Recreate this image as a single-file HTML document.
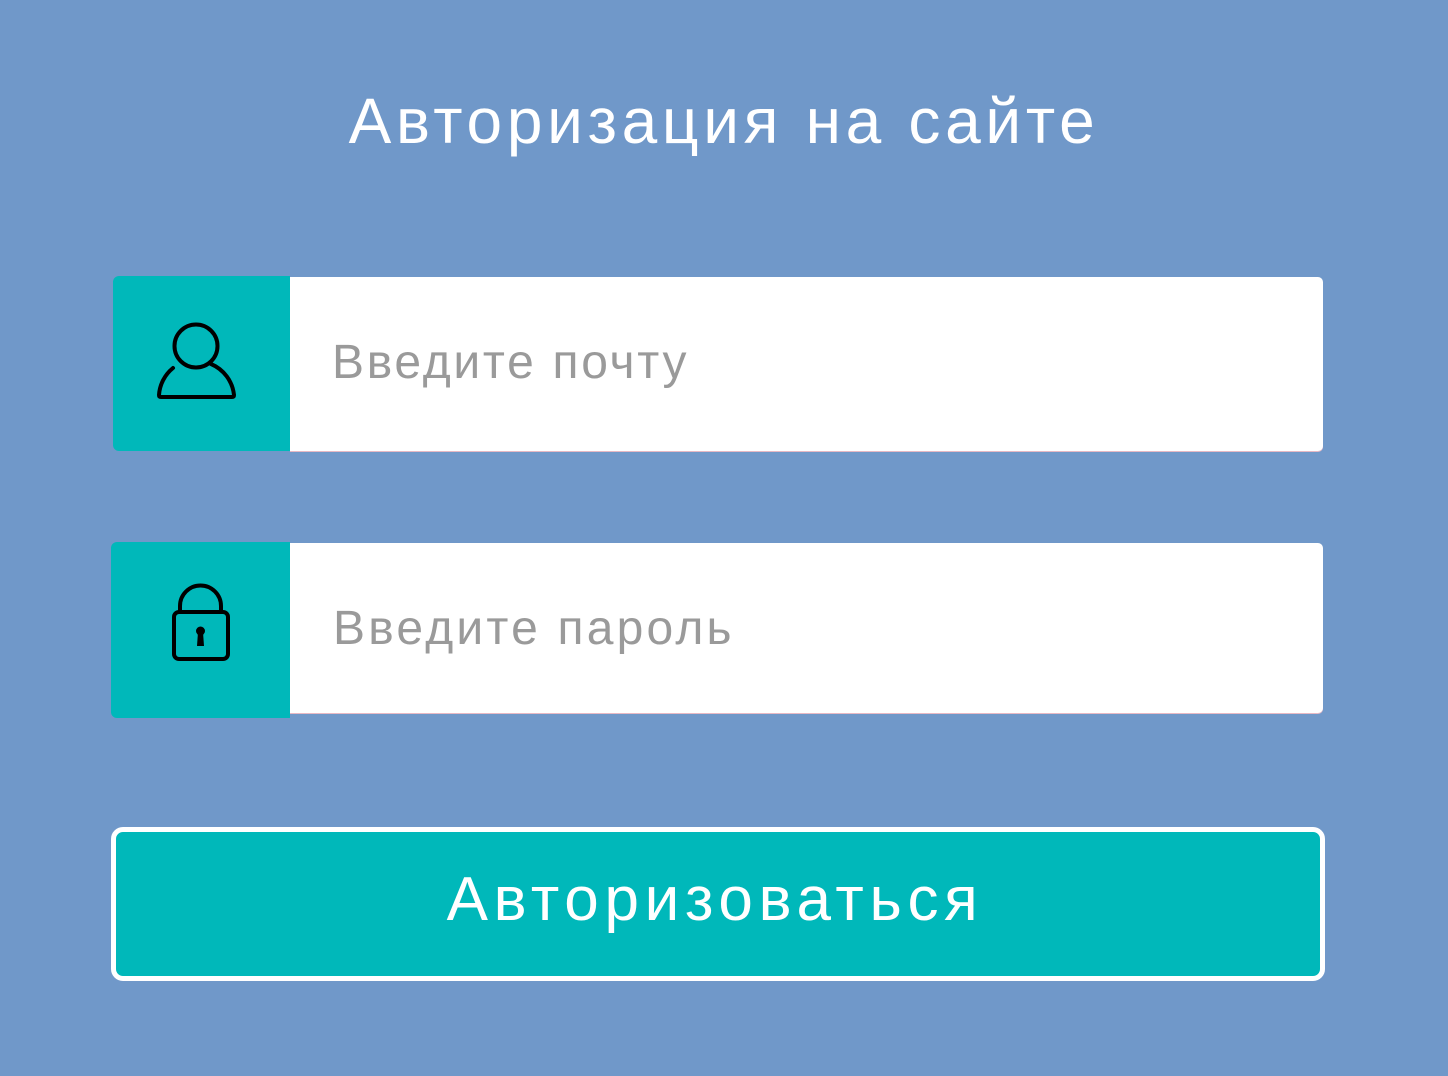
<!DOCTYPE html>
<html><head><meta charset="utf-8"><style>
html,body{margin:0;padding:0}
body{width:1448px;height:1076px;background:#7098C9;position:relative;overflow:hidden;font-family:"Liberation Sans",sans-serif}
.t{position:absolute;line-height:1;white-space:nowrap}
.teal{position:absolute;background:#00B8BA;border-radius:6px 0 0 6px}
.white{position:absolute;background:#fff;border-radius:0 5px 5px 0;box-shadow:0 1px 0 #e7b9c4}
</style></head><body>
<div class="t" style="left:0;width:1448px;text-align:center;top:89px;font-size:64px;color:#fff;letter-spacing:4.7px;">Авторизация на сайте</div>

<div class="teal" style="left:113px;top:276px;width:177px;height:175px"></div>
<div class="white" style="left:290px;top:277px;width:1033px;height:174px"></div>
<svg style="position:absolute;left:150px;top:318px" width="92" height="86" viewBox="150 318 92 86">
<circle cx="196" cy="346" r="21.5" fill="none" stroke="#000" stroke-width="4"/>
<path d="M173 368 A38 38 0 0 0 159 395 Q159 397 161 397 L232 397 Q234 397 234 395 A38 38 0 0 0 211 364" fill="none" stroke="#000" stroke-width="4" stroke-linecap="round"/>
</svg>
<div class="t" style="left:332px;top:339px;font-size:48px;color:#9a9a9a;letter-spacing:2.7px">Введите почту</div>

<div class="teal" style="left:111px;top:542px;width:179px;height:176px"></div>
<div class="white" style="left:290px;top:543px;width:1033px;height:170px"></div>
<svg style="position:absolute;left:165px;top:578px" width="72" height="90" viewBox="165 578 72 90">
<path d="M180 612 L180 606 A20.5 20.5 0 0 1 221 606 L221 612" fill="none" stroke="#000" stroke-width="4"/>
<rect x="174" y="612" width="54" height="47" rx="5" fill="none" stroke="#000" stroke-width="4"/>
<circle cx="200.5" cy="631" r="4.5" fill="#000"/>
<path d="M198 632 L203 632 L204 646 L197 646 Z" fill="#000"/>
</svg>
<div class="t" style="left:333px;top:605px;font-size:48px;color:#9a9a9a;letter-spacing:3.2px">Введите пароль</div>

<div style="position:absolute;left:111px;top:827px;width:1204px;height:144px;border:5px solid #fff;border-radius:12px;background:#00B8BA"></div>
<div class="t" style="left:108px;width:1214px;text-align:center;top:869px;font-size:62px;color:#fff;letter-spacing:5.7px">Авторизоваться</div>
</body></html>
